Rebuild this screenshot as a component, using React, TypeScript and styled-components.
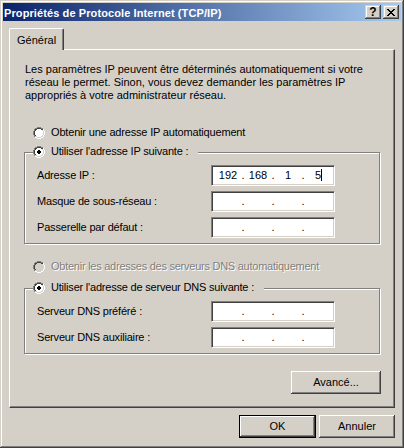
import React from 'react';
import styled, { createGlobalStyle } from 'styled-components';

const GlobalStyle = createGlobalStyle`
  html, body { margin: 0; padding: 0; background: #d4d0c8; }
  * { box-sizing: border-box; }
`;

const Window = styled.div`
  width: 404px;
  height: 448px;
  padding: 3px;
  background: #d4d0c8;
  box-shadow: inset -1px -1px #404040, inset 1px 1px #d4d0c8, inset -2px -2px #808080, inset 2px 2px #ffffff;
  display: flex;
  flex-direction: column;
  color: #000;
  font-family: "Liberation Sans", Arial, sans-serif;
  font-size: 11px;
  line-height: 13px;
`;

const TitleBar = styled.div`
  height: 18px;
  flex: none;
  display: flex;
  align-items: center;
  padding: 0 2px 0 1px;
  background: linear-gradient(to right, #0a246a, #a6caf0);
`;

const TitleText = styled.div`
  flex: 1;
  color: #fff;
  font-weight: bold;
  font-size: 11px;
  padding-top: 2px;
  white-space: nowrap;
  letter-spacing: 0.1px;
`;

const CaptionButtons = styled.div`
  display: flex;
  gap: 2px;
`;

const CaptionButton = styled.div`
  width: 16px;
  height: 14px;
  background: #d4d0c8;
  box-shadow: inset -1px -1px #404040, inset 1px 1px #d4d0c8, inset -2px -2px #808080, inset 2px 2px #ffffff;
  display: flex;
  align-items: center;
  justify-content: center;
  color: #000;
  font-weight: bold;
  font-size: 12px;
  line-height: 12px;
`;

const TabStrip = styled.div`
  flex: none;
  display: flex;
  margin-top: 7px;
  padding: 0 6px;
`;

const Tab = styled.div`
  position: relative;
  z-index: 1;
  height: 22px;
  margin-bottom: -1px;
  padding: 5px 7px 0 7px;
  background: #d4d0c8;
  border-left: 1px solid #ffffff;
  border-top: 1px solid #ffffff;
  border-right: 1px solid #404040;
  border-radius: 2px 2px 0 0;
  box-shadow: inset -1px 0 #808080;
  white-space: nowrap;
`;

const Panel = styled.div`
  flex: none;
  height: 359px;
  margin: 0 6px;
  padding: 13px 13px 0 14px;
  border-left: 1px solid #ffffff;
  border-top: 1px solid #ffffff;
  border-right: 1px solid #404040;
  border-bottom: 1px solid #404040;
  box-shadow: inset -1px -1px #808080;
  display: flex;
  flex-direction: column;
`;

const Intro = styled.p`
  margin: 0 0 0 1px;
  white-space: nowrap;
`;

const RadioRow = styled.div<{ $mt: number; $disabled?: boolean }>`
  display: flex;
  align-items: center;
  gap: 6px;
  height: 13px;
  margin-top: ${(p) => p.$mt}px;
  padding-left: 9px;
  color: ${(p) => (p.$disabled ? '#808080' : '#000')};
  text-shadow: ${(p) => (p.$disabled ? '1px 1px 0 #ffffff' : 'none')};
  letter-spacing: ${(p) => (p.$disabled ? '-0.25px' : '-0.18px')};
  white-space: nowrap;
`;

const GroupBox = styled.div<{ $mt: number }>`
  margin-top: ${(p) => p.$mt}px;
  margin-right: 1px;
  border: 1px solid #808080;
  box-shadow: inset 1px 1px #ffffff, 1px 1px 0 #ffffff;
  display: flex;
  flex-direction: column;
  padding: 0 0 5px 0;
`;

const Legend = styled.div`
  align-self: flex-start;
  display: flex;
  align-items: center;
  gap: 6px;
  height: 13px;
  margin: -8px 0 0 8px;
  padding-right: 10px;
  background: #d4d0c8;
  letter-spacing: -0.2px;
  white-space: nowrap;
`;

const FieldGrid = styled.div`
  display: grid;
  grid-template-columns: 174px 124px;
  grid-auto-rows: 21px;
  row-gap: 5px;
  align-items: center;
  margin-top: 7px;
  padding-left: 12px;
`;

const FieldLabel = styled.div`
  white-space: nowrap;
  letter-spacing: -0.18px;
`;

const IpBox = styled.div`
  height: 21px;
  background: #ffffff;
  border: 1px solid;
  border-color: #808080 #ffffff #ffffff #808080;
  box-shadow: inset 1px 1px #404040, inset -1px -1px #d4d0c8;
  display: flex;
  align-items: center;
  padding-left: 3px;
`;

const IpPart = styled.span`
  width: 26px;
  text-align: center;
  white-space: nowrap;
`;

const IpDot = styled.span`
  width: 4px;
  text-align: center;
`;

const Caret = styled.span`
  display: inline-block;
  width: 1px;
  height: 12px;
  margin-right: -1px;
  vertical-align: top;
  background: #000;
`;

const PushButton = styled.div<{ $w: number; $default?: boolean }>`
  width: ${(p) => p.$w}px;
  height: 23px;
  flex: none;
  display: flex;
  align-items: center;
  justify-content: center;
  background: #d4d0c8;
  border: ${(p) => (p.$default ? '1px solid #000' : 'none')};
  box-shadow: inset -1px -1px #404040, inset 1px 1px #ffffff, inset -2px -2px #808080;
  white-space: nowrap;
`;

const AdvancedRow = styled.div`
  display: flex;
  justify-content: flex-end;
  margin-top: 17px;
`;

const Footer = styled.div`
  flex: none;
  display: flex;
  justify-content: flex-end;
  gap: 3px;
  margin-top: 7px;
  padding-right: 6px;
`;

const RADIO_MAP = [
  '....GGGG....',
  '..GGDDDDGG..',
  '.GDDffffDDW.',
  '.GDffffffLW.',
  'GDffffffffLW',
  'GDffffffffLW',
  'GDffffffffLW',
  'GDffffffffLW',
  '.GDffffffLW.',
  '.GLLffffLLW.',
  '..WWLLLLWW..',
  '....WWWW....',
];
const DOT: Record<number, [number, number]> = { 4: [5, 6], 5: [4, 7], 6: [4, 7], 7: [5, 6] };

function Radio({ checked, disabled }: { checked?: boolean; disabled?: boolean }) {
  const colors: Record<string, string> = {
    G: '#808080',
    D: '#404040',
    W: '#ffffff',
    L: '#d4d0c8',
    f: disabled ? '#d4d0c8' : '#ffffff',
  };
  const rects: React.ReactNode[] = [];
  RADIO_MAP.forEach((row, y) => {
    row.split('').forEach((c, x) => {
      let col = colors[c];
      if (checked && DOT[y] && x >= DOT[y][0] && x <= DOT[y][1]) col = '#000000';
      if (col) rects.push(<rect key={`${x}-${y}`} x={x} y={y} width={1} height={1} fill={col} />);
    });
  });
  return (
    <svg width="12" height="12" viewBox="0 0 12 12" shapeRendering="crispEdges" style={{ flex: 'none' }}>
      {rects}
    </svg>
  );
}

function CloseGlyph() {
  const rows = ['XX....XX', '.XX..XX.', '..XXXX..', '...XX...', '..XXXX..', '.XX..XX.', 'XX....XX'];
  const rects: React.ReactNode[] = [];
  rows.forEach((r, y) =>
    r.split('').forEach((c, x) => {
      if (c === 'X') rects.push(<rect key={`${x}-${y}`} x={x} y={y} width={1} height={1} fill="#000" />);
    })
  );
  return (
    <svg width="8" height="7" viewBox="0 0 8 7" shapeRendering="crispEdges">
      {rects}
    </svg>
  );
}

function IpField({ parts, caret }: { parts?: string[]; caret?: boolean }) {
  const p = parts ?? ['', '', '', ''];
  return (
    <IpBox>
      <IpPart>{p[0]}</IpPart>
      <IpDot>.</IpDot>
      <IpPart>{p[1]}</IpPart>
      <IpDot>.</IpDot>
      <IpPart>{p[2]}</IpPart>
      <IpDot>.</IpDot>
      <IpPart>
        {p[3]}
        {caret && <Caret />}
      </IpPart>
    </IpBox>
  );
}

export default function App() {
  return (
    <>
      <GlobalStyle />
      <Window>
        <TitleBar>
          <TitleText>Propriétés de Protocole Internet (TCP/IP)</TitleText>
          <CaptionButtons>
            <CaptionButton>?</CaptionButton>
            <CaptionButton>
              <CloseGlyph />
            </CaptionButton>
          </CaptionButtons>
        </TitleBar>
        <TabStrip>
          <Tab>Général</Tab>
        </TabStrip>
        <Panel>
          <Intro>
            Les paramètres IP peuvent être déterminés automatiquement si votre
            <br />
            réseau le permet. Sinon, vous devez demander les paramètres IP
            <br />
            appropriés à votre administrateur réseau.
          </Intro>
          <RadioRow $mt={24}>
            <Radio />
            <span>Obtenir une adresse IP automatiquement</span>
          </RadioRow>
          <GroupBox $mt={13}>
            <Legend>
              <Radio checked />
              <span>Utiliser l'adresse IP suivante :</span>
            </Legend>
            <FieldGrid>
              <FieldLabel>Adresse IP :</FieldLabel>
              <IpField parts={['192', '168', '1', '5']} caret />
              <FieldLabel>Masque de sous-réseau :</FieldLabel>
              <IpField />
              <FieldLabel>Passerelle par défaut :</FieldLabel>
              <IpField />
            </FieldGrid>
          </GroupBox>
          <RadioRow $mt={16} $disabled>
            <Radio disabled />
            <span>Obtenir les adresses des serveurs DNS automatiquement</span>
          </RadioRow>
          <GroupBox $mt={15}>
            <Legend>
              <Radio checked />
              <span>Utiliser l'adresse de serveur DNS suivante :</span>
            </Legend>
            <FieldGrid>
              <FieldLabel>Serveur DNS préféré :</FieldLabel>
              <IpField />
              <FieldLabel>Serveur DNS auxiliaire :</FieldLabel>
              <IpField />
            </FieldGrid>
          </GroupBox>
          <AdvancedRow>
            <PushButton $w={90}>Avancé...</PushButton>
          </AdvancedRow>
        </Panel>
        <Footer>
          <PushButton $w={77} $default>
            OK
          </PushButton>
          <PushButton $w={76}>Annuler</PushButton>
        </Footer>
      </Window>
    </>
  );
}
